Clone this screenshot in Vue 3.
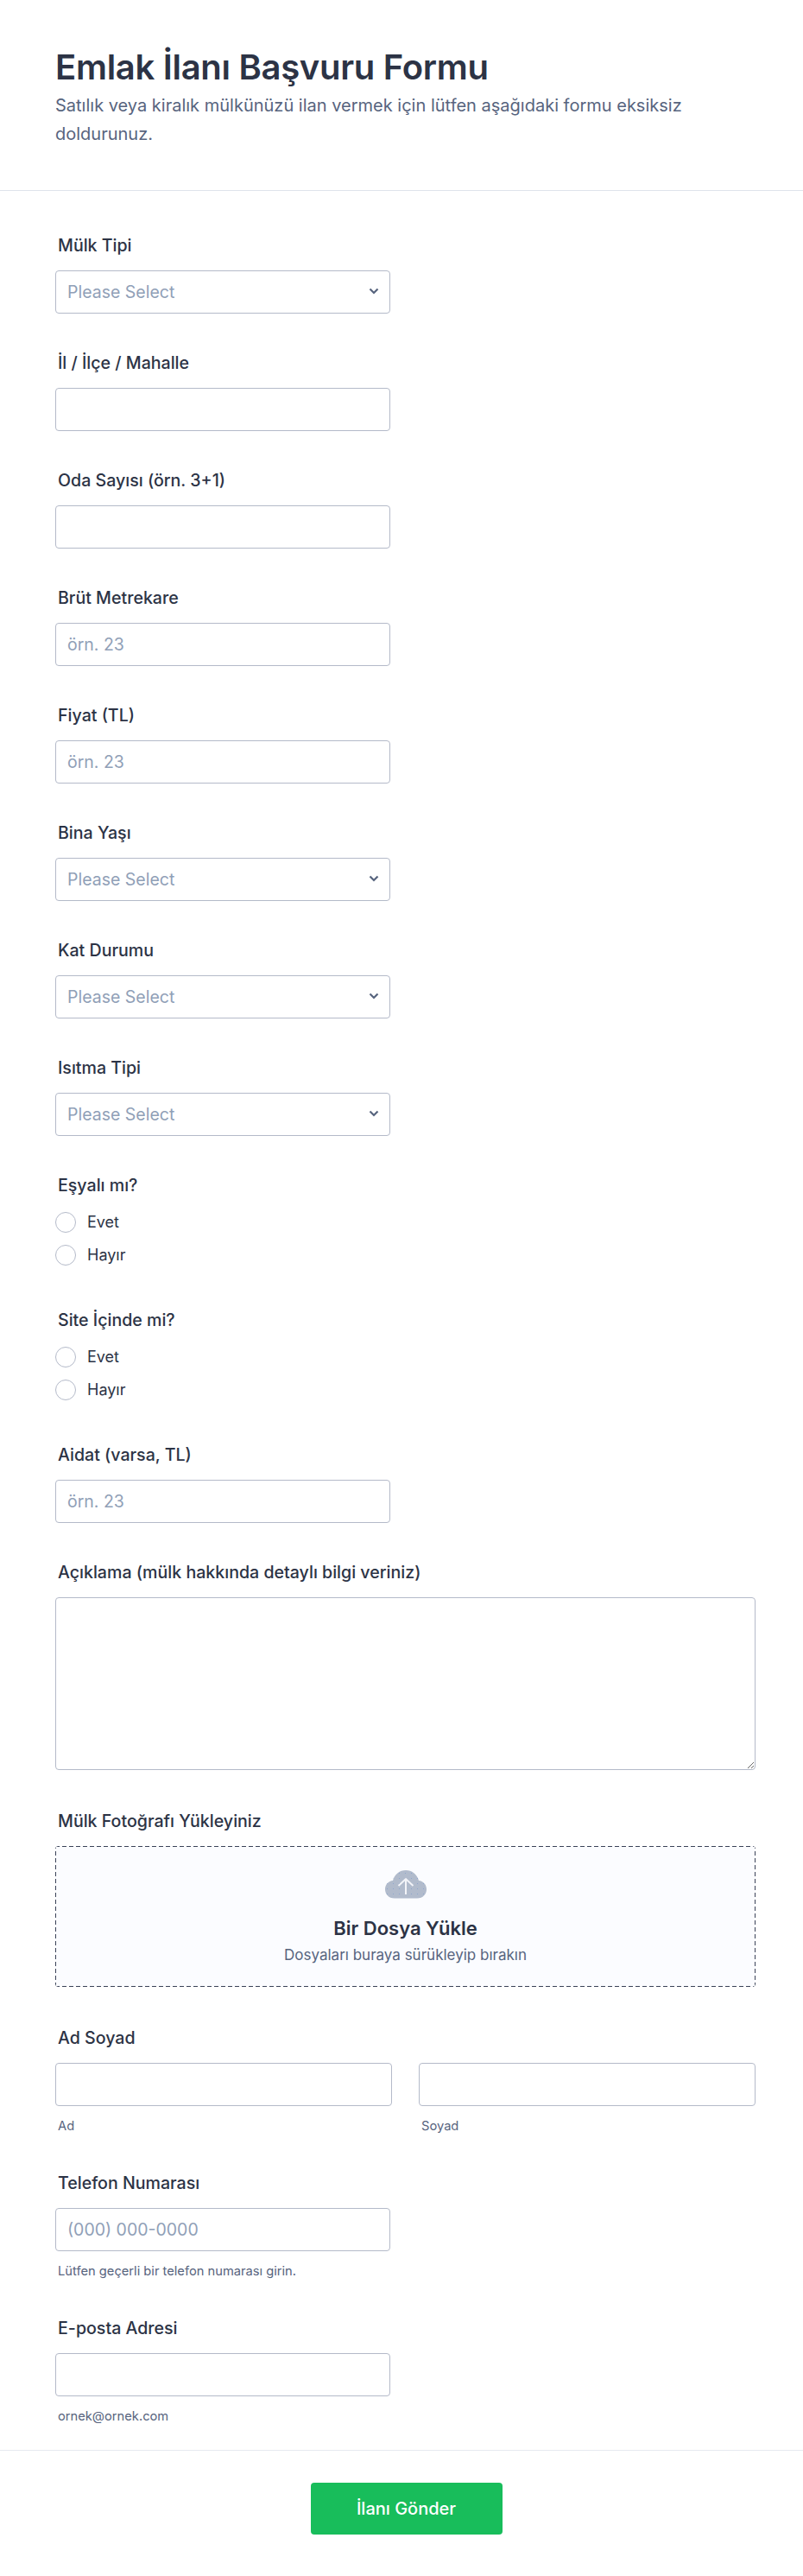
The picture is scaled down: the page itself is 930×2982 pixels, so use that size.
<script setup>
const topFields = [
  { label: "Mülk Tipi", type: "select" },
  { label: "İl / İlçe / Mahalle", type: "input" },
  { label: "Oda Sayısı (örn. 3+1)", type: "input" },
  { label: "Brüt Metrekare", type: "input", placeholder: "örn. 23" },
  { label: "Fiyat (TL)", type: "input", placeholder: "örn. 23" },
  { label: "Bina Yaşı", type: "select" },
  { label: "Kat Durumu", type: "select" },
  { label: "Isıtma Tipi", type: "select" },
  { label: "Eşyalı mı?", type: "radio" },
  { label: "Site İçinde mi?", type: "radio" },
  { label: "Aidat (varsa, TL)", type: "input", placeholder: "örn. 23" },
];
const cloud =
  "M11 32.5C4 32.5 0 27.5 0 22 0 16.5 4 12.5 9 12 11 4.5 17 0 24 0s13 4.5 15 12c5 .5 9 4.5 9 10 0 5.5-4 10.5-11 10.5Z";
</script>

<template>
  <div class="page">
    <header class="head">
      <h1>Emlak İlanı Başvuru Formu</h1>
      <p>Satılık veya kiralık mülkünüzü ilan vermek için lütfen aşağıdaki formu eksiksiz doldurunuz.</p>
    </header>

    <form class="body" @submit.prevent>
      <div
        v-for="field in topFields"
        :key="field.label"
        class="field"
        :class="{ 'field-radio': field.type === 'radio' }"
      >
        <label class="label">{{ field.label }}</label>
        <div v-if="field.type === 'select'" class="select-wrap">
          <select class="control select">
            <option>Please Select</option>
          </select>
          <svg class="chevron" width="12" height="8" viewBox="0 0 12 8">
            <path d="M1.5 1.5 6 6l4.5-4.5" fill="none" stroke="#57647e" stroke-width="2.2" />
          </svg>
        </div>
        <input
          v-else-if="field.type === 'input'"
          class="control short"
          type="text"
          :placeholder="field.placeholder"
        />
        <div v-else class="radios">
          <label class="radio"><input type="radio" :name="field.label" /><span>Evet</span></label>
          <label class="radio"><input type="radio" :name="field.label" /><span>Hayır</span></label>
        </div>
      </div>

      <div class="field">
        <label class="label">Açıklama (mülk hakkında detaylı bilgi veriniz)</label>
        <textarea class="control area"></textarea>
      </div>

      <div class="field field-upload">
        <label class="label">Mülk Fotoğrafı Yükleyiniz</label>
        <div class="drop">
          <svg width="48" height="33" viewBox="0 0 48 33">
            <defs>
              <pattern id="dots" width="7" height="6" patternUnits="userSpaceOnUse">
                <rect x="2" y="3" width="1" height="1" fill="#8fa6cc" />
              </pattern>
            </defs>
            <path :d="cloud" fill="#b1bbcc" />
            <path :d="cloud" fill="url(#dots)" />
            <path d="M24 28V10M15.5 18 24 10l8.5 8" fill="none" stroke="#f3f4f8" stroke-width="2" />
          </svg>
          <div class="drop-title">Bir Dosya Yükle</div>
          <div class="drop-sub">Dosyaları buraya sürükleyip bırakın</div>
        </div>
      </div>

      <div class="field">
        <label class="label">Ad Soyad</label>
        <div class="name-row">
          <div>
            <input class="control" type="text" />
            <div class="hint">Ad</div>
          </div>
          <div>
            <input class="control" type="text" />
            <div class="hint">Soyad</div>
          </div>
        </div>
      </div>

      <div class="field">
        <label class="label">Telefon Numarası</label>
        <input class="control short" type="text" placeholder="(000) 000-0000" />
        <div class="hint">Lütfen geçerli bir telefon numarası girin.</div>
      </div>

      <div class="field">
        <label class="label">E-posta Adresi</label>
        <input class="control short" type="text" />
        <div class="hint">ornek@ornek.com</div>
      </div>
    </form>

    <footer class="foot">
      <button class="submit" type="button">İlanı Gönder</button>
    </footer>
  </div>
</template>

<style scoped>
.page {
  width: 930px;
  height: 2982px;
  background: #fff;
  font-family: Inter, "Noto Sans", sans-serif;
  color: #2c3345;
  overflow: hidden;
}

.head {
  height: 220px;
  border-bottom: 1px solid #dfe3ec;
  padding: 0 64px;
}

.head h1 {
  margin: 0 0 2px;
  padding-top: 52px;
  font-size: 40px;
  line-height: 52px;
  font-weight: 600;
  letter-spacing: -0.3px;
}

.head p {
  margin: 0;
  width: 760px;
  font-size: 20px;
  line-height: 33px;
  color: #57647e;
}

.body {
  padding: 52px 55px 0 64px;
}

.field {
  margin-bottom: 46px;
}

.field-radio {
  margin-bottom: 52px;
}

.field-upload {
  margin-top: 48px;
  margin-bottom: 48px;
}

.label {
  display: block;
  padding-left: 3px;
  margin-bottom: 18px;
  font-size: 19.6px;
  line-height: 22px;
  font-weight: 500;
}

.control {
  display: block;
  box-sizing: border-box;
  width: 100%;
  height: 50px;
  padding: 0 13px;
  border: 1px solid #b4bac9;
  border-radius: 4px;
  background: #fff;
  font-family: inherit;
  font-size: 19.5px;
  color: #2c3345;
  outline: none;
}

.control::placeholder {
  color: #90a0b7;
  opacity: 1;
}

.short,
.select-wrap {
  width: 388px;
}

.select-wrap {
  position: relative;
}

.select {
  appearance: none;
  color: #90a0b7;
}

.chevron {
  position: absolute;
  top: 20px;
  right: 13px;
}

.radios {
  display: flex;
  flex-direction: column;
  gap: 14px;
  padding-top: 2px;
}

.radio {
  display: flex;
  align-items: center;
  gap: 13px;
  font-size: 18px;
  line-height: 24px;
}

.radio input {
  appearance: none;
  width: 24px;
  height: 24px;
  margin: 0;
  border: 1px solid #b4bac9;
  border-radius: 50%;
  background: #fff;
}

.area {
  height: 200px;
  padding: 12px;
}

/* gradients give the 5px dash of the reference, border: dashed is shorter */
.drop {
  display: flex;
  flex-direction: column;
  align-items: center;
  box-sizing: border-box;
  height: 163px;
  padding-top: 28px;
  border-radius: 4px;
  background-color: #fbfcff;
  background-image:
    repeating-linear-gradient(90deg, #3a4257 0 5px, transparent 5px 8px),
    repeating-linear-gradient(90deg, #3a4257 0 5px, transparent 5px 8px),
    repeating-linear-gradient(0deg, #3a4257 0 5px, transparent 5px 8px),
    repeating-linear-gradient(0deg, #3a4257 0 5px, transparent 5px 8px);
  background-size: 100% 1px, 100% 1px, 1px 100%, 1px 100%;
  background-position: 0 0, 0 100%, 0 0, 100% 0;
  background-repeat: no-repeat;
}

.drop-title {
  margin-top: 20px;
  font-size: 22px;
  line-height: 28px;
  font-weight: 600;
}

.drop-sub {
  margin-top: 6px;
  font-size: 17px;
  line-height: 22px;
  color: #57647e;
}

.name-row {
  display: grid;
  grid-template-columns: 390px 390px;
  gap: 31px;
}

.hint {
  margin-top: 14px;
  padding-left: 3px;
  font-size: 14.7px;
  line-height: 18px;
  color: #57647e;
}

.foot {
  display: flex;
  justify-content: center;
  margin-top: -16px;
  padding-top: 37px;
  padding-left: 11px;
  border-top: 1px solid #e6e9f0;
}

.submit {
  width: 222px;
  height: 60px;
  border: none;
  border-radius: 4px;
  background: #18bd5b;
  font-family: inherit;
  font-size: 20px;
  font-weight: 500;
  color: #fff;
}
</style>
